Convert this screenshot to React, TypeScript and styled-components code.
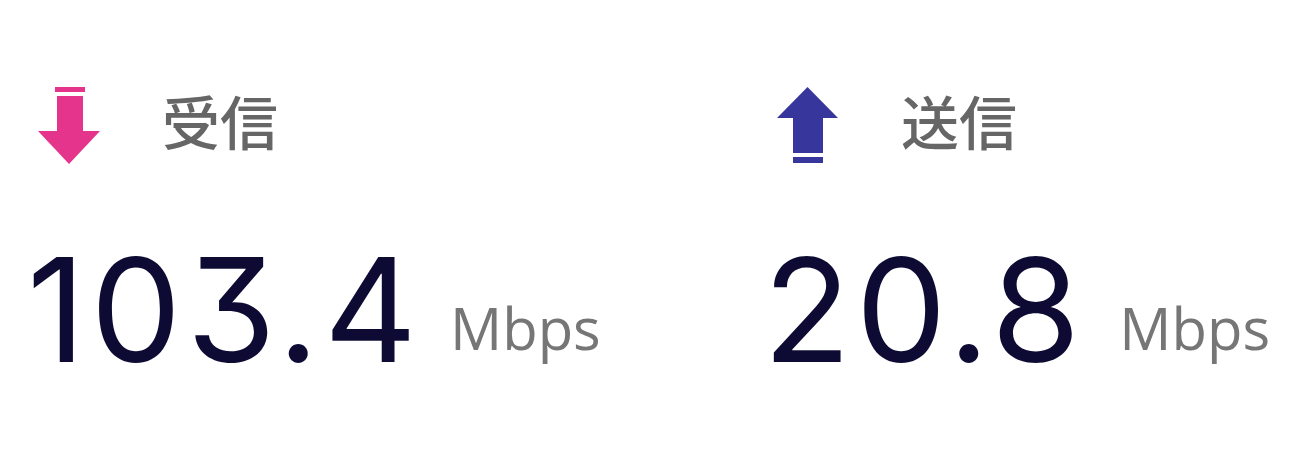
import React from "react";
import styled, { createGlobalStyle } from "styled-components";

const Global = createGlobalStyle`
  html, body { margin: 0; padding: 0; background: #ffffff; }
  body { width: 1300px; height: 452px; overflow: hidden; }
`;

const Page = styled.div`
  display: grid;
  grid-template-columns: 740px 1fr;
  padding: 87px 0 0 28px;
  box-sizing: border-box;
  height: 452px;
`;

const Stat = styled.section`
  display: flex;
  flex-direction: column;
`;

const Head = styled.div<{ $iconInset: number }>`
  display: flex;
  align-items: center;
  gap: 62px;
  padding-left: ${(p) => p.$iconInset}px;
  height: 78px;
`;

const Label = styled.span`
  font-family: "Noto Sans CJK JP", "Noto Sans", sans-serif;
  font-weight: 500;
  font-size: 58px;
  line-height: 1;
  color: #666666;
  margin-bottom: 12px;
`;

const ValueRow = styled.div`
  display: flex;
  align-items: flex-end;
  margin-top: 80px;
`;

const Value = styled.span<{ $shift: number }>`
  font-family: Inter, "Noto Sans", sans-serif;
  font-feature-settings: "cv09" 1;
  font-weight: 400;
  font-size: 144px;
  line-height: 130px;
  letter-spacing: 5px;
  color: #0d0b33;
  margin-left: ${(p) => p.$shift}px;
`;

const Unit = styled.span<{ $gap: number }>`
  font-family: "Open Sans", "Noto Sans", sans-serif;
  font-size: 58px;
  line-height: 58px;
  color: #767676;
  margin-left: ${(p) => p.$gap}px;
  padding-bottom: 18px;
`;

const DownIcon = () => (
  <svg width="62" height="78" viewBox="0 0 62 78" aria-hidden>
    <rect x="17" y="0" width="30" height="5" fill="#e4348b" />
    <rect x="19" y="9" width="26" height="36" fill="#e4348b" />
    <polygon points="0,44 62,44 31,77" fill="#e4348b" />
  </svg>
);

const UpIcon = () => (
  <svg width="62" height="78" viewBox="0 0 62 78" aria-hidden>
    <polygon points="0,31 61,31 30.5,0" fill="#37369c" />
    <rect x="16" y="30" width="30" height="36" fill="#37369c" />
    <rect x="16" y="70" width="30" height="6" fill="#37369c" />
  </svg>
);

export default function App() {
  return (
    <>
      <Global />
      <Page>
        <Stat>
          <Head $iconInset={10}>
            <DownIcon />
            <Label>受信</Label>
          </Head>
          <ValueRow>
            <Value $shift={-1}>103.4</Value>
            <Unit $gap={28}>Mbps</Unit>
          </ValueRow>
        </Stat>
        <Stat>
          <Head $iconInset={9}>
            <UpIcon />
            <Label>送信</Label>
          </Head>
          <ValueRow>
            <Value $shift={-5}>20.8</Value>
            <Unit $gap={34}>Mbps</Unit>
          </ValueRow>
        </Stat>
      </Page>
    </>
  );
}
